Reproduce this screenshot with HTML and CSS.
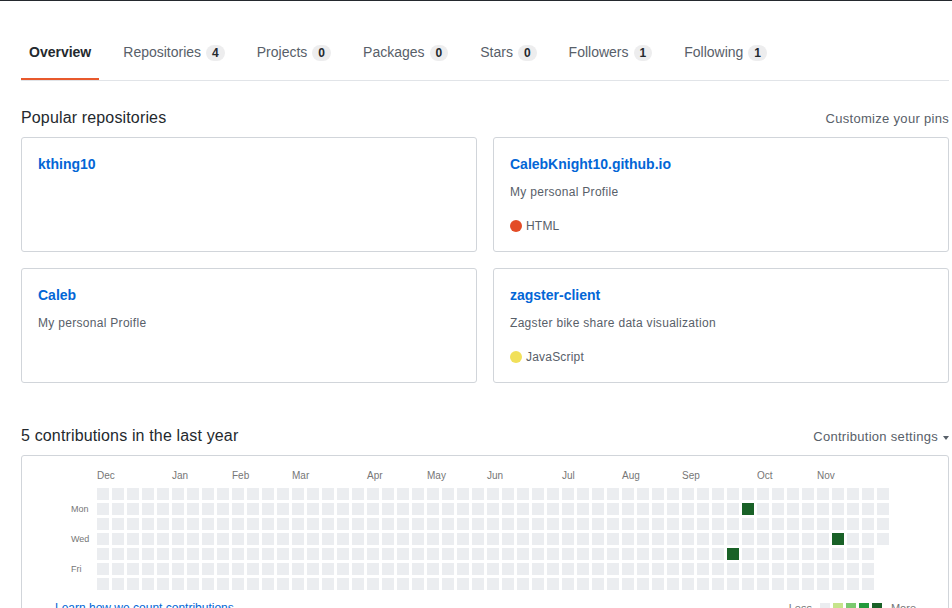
FILE: index.html
```html
<!DOCTYPE html>
<html lang="en">
<head>
<meta charset="utf-8">
<title>Overview</title>
<link rel="stylesheet" href="styles.css">
</head>
<body>
<div class="page">
  <nav class="tabs">
    <a class="tab active" href="#">Overview</a>
    <a class="tab" href="#">Repositories<span class="counter">4</span></a>
    <a class="tab" href="#">Projects<span class="counter">0</span></a>
    <a class="tab" href="#">Packages<span class="counter">0</span></a>
    <a class="tab" href="#">Stars<span class="counter">0</span></a>
    <a class="tab" href="#">Followers<span class="counter">1</span></a>
    <a class="tab" href="#">Following<span class="counter">1</span></a>
  </nav>

  <section class="pinned">
    <div class="section-head">
      <h2>Popular repositories</h2>
      <a class="head-link" href="#">Customize your pins</a>
    </div>
    <div class="cards">
      <div class="card">
        <a class="repo" href="#">kthing10</a>
      </div>
      <div class="card">
        <a class="repo" href="#">CalebKnight10.github.io</a>
        <p class="desc">My personal Profile</p>
        <p class="lang"><span class="dot html"></span>HTML</p>
      </div>
      <div class="card">
        <a class="repo" href="#">Caleb</a>
        <p class="desc">My personal Proifle</p>
      </div>
      <div class="card">
        <a class="repo" href="#">zagster-client</a>
        <p class="desc">Zagster bike share data visualization</p>
        <p class="lang"><span class="dot js"></span>JavaScript</p>
      </div>
    </div>
  </section>

  <section class="contrib">
    <div class="section-head">
      <h2>5 contributions in the last year</h2>
      <span class="head-link">Contribution settings<span class="caret"></span></span>
    </div>
    <div class="graph-box">
      <div class="graph">
        <div class="days">
          <span></span><span>Mon</span><span></span><span>Wed</span><span></span><span>Fri</span><span></span>
        </div>
        <div class="weeks">
          <div class="months">
            <span style="grid-column: 1 / span 3">Dec</span>
            <span style="grid-column: 6 / span 3">Jan</span>
            <span style="grid-column: 10 / span 3">Feb</span>
            <span style="grid-column: 14 / span 3">Mar</span>
            <span style="grid-column: 19 / span 3">Apr</span>
            <span style="grid-column: 23 / span 3">May</span>
            <span style="grid-column: 27 / span 3">Jun</span>
            <span style="grid-column: 32 / span 3">Jul</span>
            <span style="grid-column: 36 / span 3">Aug</span>
            <span style="grid-column: 40 / span 3">Sep</span>
            <span style="grid-column: 45 / span 3">Oct</span>
            <span style="grid-column: 49 / span 3">Nov</span>
          </div>
          <div class="cells">
            <!-- weeks 0-9 -->
            <i></i><i></i><i></i><i></i><i></i><i></i><i></i>
            <i></i><i></i><i></i><i></i><i></i><i></i><i></i>
            <i></i><i></i><i></i><i></i><i></i><i></i><i></i>
            <i></i><i></i><i></i><i></i><i></i><i></i><i></i>
            <i></i><i></i><i></i><i></i><i></i><i></i><i></i>
            <i></i><i></i><i></i><i></i><i></i><i></i><i></i>
            <i></i><i></i><i></i><i></i><i></i><i></i><i></i>
            <i></i><i></i><i></i><i></i><i></i><i></i><i></i>
            <i></i><i></i><i></i><i></i><i></i><i></i><i></i>
            <i></i><i></i><i></i><i></i><i></i><i></i><i></i>
            <!-- weeks 10-19 -->
            <i></i><i></i><i></i><i></i><i></i><i></i><i></i>
            <i></i><i></i><i></i><i></i><i></i><i></i><i></i>
            <i></i><i></i><i></i><i></i><i></i><i></i><i></i>
            <i></i><i></i><i></i><i></i><i></i><i></i><i></i>
            <i></i><i></i><i></i><i></i><i></i><i></i><i></i>
            <i></i><i></i><i></i><i></i><i></i><i></i><i></i>
            <i></i><i></i><i></i><i></i><i></i><i></i><i></i>
            <i></i><i></i><i></i><i></i><i></i><i></i><i></i>
            <i></i><i></i><i></i><i></i><i></i><i></i><i></i>
            <i></i><i></i><i></i><i></i><i></i><i></i><i></i>
            <!-- weeks 20-29 -->
            <i></i><i></i><i></i><i></i><i></i><i></i><i></i>
            <i></i><i></i><i></i><i></i><i></i><i></i><i></i>
            <i></i><i></i><i></i><i></i><i></i><i></i><i></i>
            <i></i><i></i><i></i><i></i><i></i><i></i><i></i>
            <i></i><i></i><i></i><i></i><i></i><i></i><i></i>
            <i></i><i></i><i></i><i></i><i></i><i></i><i></i>
            <i></i><i></i><i></i><i></i><i></i><i></i><i></i>
            <i></i><i></i><i></i><i></i><i></i><i></i><i></i>
            <i></i><i></i><i></i><i></i><i></i><i></i><i></i>
            <i></i><i></i><i></i><i></i><i></i><i></i><i></i>
            <!-- weeks 30-39 -->
            <i></i><i></i><i></i><i></i><i></i><i></i><i></i>
            <i></i><i></i><i></i><i></i><i></i><i></i><i></i>
            <i></i><i></i><i></i><i></i><i></i><i></i><i></i>
            <i></i><i></i><i></i><i></i><i></i><i></i><i></i>
            <i></i><i></i><i></i><i></i><i></i><i></i><i></i>
            <i></i><i></i><i></i><i></i><i></i><i></i><i></i>
            <i></i><i></i><i></i><i></i><i></i><i></i><i></i>
            <i></i><i></i><i></i><i></i><i></i><i></i><i></i>
            <i></i><i></i><i></i><i></i><i></i><i></i><i></i>
            <i></i><i></i><i></i><i></i><i></i><i></i><i></i>
            <!-- weeks 40-49 -->
            <i></i><i></i><i></i><i></i><i></i><i></i><i></i>
            <i></i><i></i><i></i><i></i><i></i><i></i><i></i>
            <i></i><i></i><i></i><i></i><i class="l4"></i><i></i><i></i>
            <i></i><i class="l4"></i><i></i><i></i><i></i><i></i><i></i>
            <i></i><i></i><i></i><i></i><i></i><i></i><i></i>
            <i></i><i></i><i></i><i></i><i></i><i></i><i></i>
            <i></i><i></i><i></i><i></i><i></i><i></i><i></i>
            <i></i><i></i><i></i><i></i><i></i><i></i><i></i>
            <i></i><i></i><i></i><i></i><i></i><i></i><i></i>
            <i></i><i></i><i></i><i class="l4"></i><i></i><i></i><i></i>
            <!-- weeks 50-52 -->
            <i></i><i></i><i></i><i></i><i></i><i></i><i></i>
            <i></i><i></i><i></i><i></i><i></i><i></i><i></i>
            <i></i><i></i><i></i><i></i>
          </div>
        </div>
      </div>
      <div class="graph-foot">
        <a class="learn" href="#">Learn how we count contributions</a>
        <div class="legend">
          <span class="legend-text">Less</span>
          <i class="l0"></i><i class="l1"></i><i class="l2"></i><i class="l3"></i><i class="l4"></i>
          <span class="legend-text more">More</span>
        </div>
      </div>
    </div>
  </section>
</div>
</body>
</html>
```
FILE: styles.css
```css
* {
  box-sizing: border-box;
}

body {
  margin: 0;
  border-top: 1px solid #24292e;
  background: #fff;
  color: #24292e;
  font-family: "Liberation Sans", Arial, sans-serif;
}

a {
  text-decoration: none;
}

.page {
  width: 928px;
  margin-left: 21px;
  padding-top: 24px;
}

/* Tabs */
.tabs {
  display: flex;
  border-bottom: 1px solid #e1e4e8;
}

.tab {
  display: inline-flex;
  align-items: center;
  padding: 17px 8px 15px;
  margin-right: 16px;
  font-size: 14px;
  line-height: 21px;
  color: #586069;
  border-bottom: 2px solid transparent;
}

.tab.active {
  color: #24292e;
  font-weight: 600;
  border-bottom-color: #e8592c;
}

.counter {
  margin-left: 5px;
  padding: 2px 6px;
  font-size: 12px;
  line-height: 1;
  font-weight: 600;
  color: #24292e;
  background: rgba(27, 31, 35, 0.08);
  border-radius: 20px;
}

/* Section heads */
.section-head {
  display: flex;
  justify-content: space-between;
  align-items: baseline;
  padding-top: 1px;
  margin-bottom: 7px;
}

.section-head h2 {
  margin: 0;
  font-size: 16px;
  line-height: 24px;
  font-weight: 400;
  letter-spacing: 0.15px;
  color: #24292e;
}

.head-link {
  font-size: 13px;
  letter-spacing: 0.3px;
  color: #586069;
}

/* Pinned */
.pinned {
  margin-top: 24px;
}

.cards {
  display: grid;
  grid-template-columns: 1fr 1fr;
  gap: 16px;
}

.card {
  border: 1px solid #d1d5da;
  border-radius: 3px;
  padding: 16px;
}

.repo {
  display: block;
  font-size: 14px;
  line-height: 21px;
  font-weight: 600;
  color: #0366d6;
}

.desc {
  margin: 8px 0 0;
  font-size: 12px;
  line-height: 18px;
  letter-spacing: 0.3px;
  color: #586069;
}

.lang {
  margin: 16px 0 0;
  display: flex;
  align-items: center;
  font-size: 12px;
  line-height: 18px;
  letter-spacing: 0.2px;
  color: #586069;
}

.dot {
  width: 12px;
  height: 12px;
  border-radius: 50%;
  margin-right: 4px;
}

.dot.html {
  background: #e34c26;
}

.dot.js {
  background: #f1e05a;
}

/* Contributions */
.contrib {
  margin-top: 40px;
}

.caret {
  display: inline-block;
  margin-left: 5px;
  vertical-align: middle;
  border-top: 4px solid #586069;
  border-left: 3.5px solid transparent;
  border-right: 3.5px solid transparent;
}

.graph-box {
  border: 1px solid #d1d5da;
  border-radius: 3px;
  padding: 11px 0 20px;
}

.graph {
  display: flex;
  padding-left: 49px;
}

.days {
  width: 26px;
  padding-top: 21px;
  display: grid;
  grid-template-rows: repeat(7, 12px);
  row-gap: 3px;
  font-size: 9px;
  line-height: 12px;
  color: #767676;
}

.months {
  display: grid;
  grid-template-columns: repeat(53, 12px);
  column-gap: 3px;
  height: 18px;
  font-size: 10px;
  line-height: 18px;
  color: #767676;
}

.months span {
  white-space: nowrap;
}

.cells {
  display: grid;
  grid-template-rows: repeat(7, 12px);
  grid-auto-flow: column;
  grid-auto-columns: 12px;
  gap: 3px;
  margin-top: 3px;
}

.cells i {
  display: block;
  background: #ebedf0;
}

.cells i.l4 {
  background: #196127;
}

.graph-foot {
  display: flex;
  justify-content: space-between;
  align-items: center;
  margin-top: 9px;
  padding: 0 32px 0 33px;
  line-height: 18px;
}

.learn {
  font-size: 12px;
  color: #0366d6;
}

.legend {
  display: flex;
  align-items: center;
  font-size: 11px;
  color: #767676;
}

.legend-text {
  margin-right: 8px;
}

.legend-text.more {
  margin: 0 0 0 6px;
}

.legend i {
  display: block;
  width: 10px;
  height: 10px;
  margin-right: 3px;
}

.legend i.l0 { background: #ebedf0; }
.legend i.l1 { background: #c6e48b; }
.legend i.l2 { background: #7bc96f; }
.legend i.l3 { background: #239a3b; }
.legend i.l4 { background: #196127; }
```
